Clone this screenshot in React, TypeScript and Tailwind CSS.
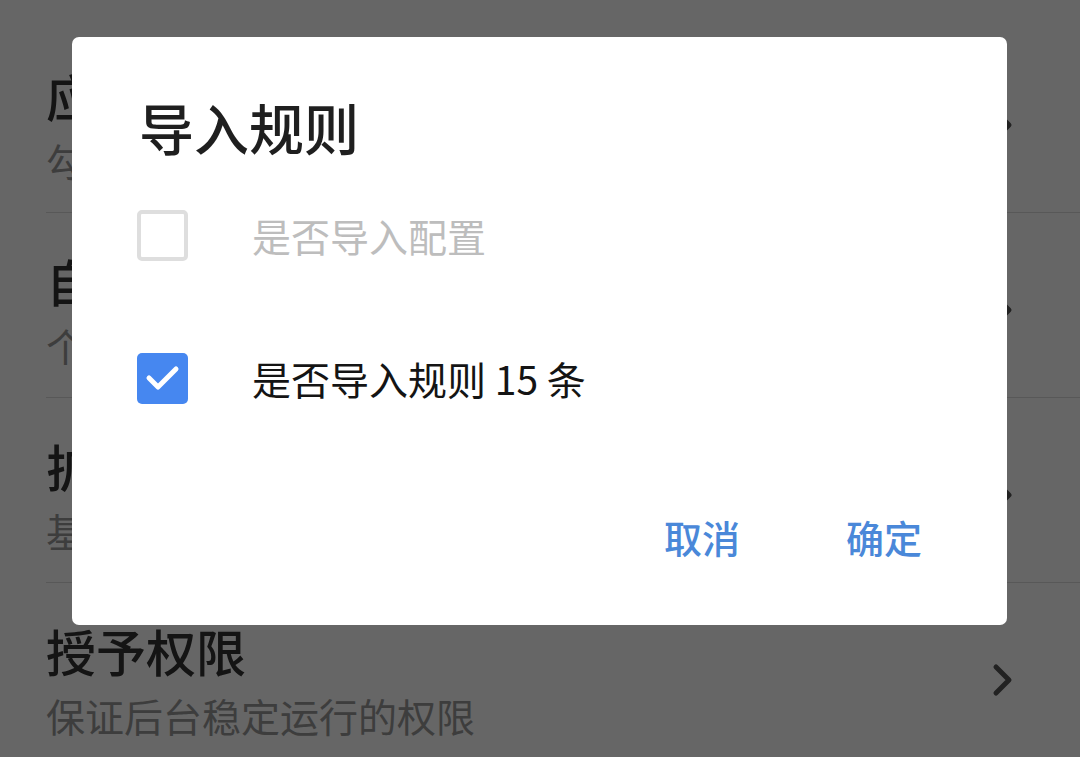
import { useState } from 'react';

const rows = [
  { title: '应用规则管理', sub: '勾选需要生效的规则' },
  { title: '自定义规则', sub: '个性化添加跳过规则' },
  { title: '扩展功能', sub: '基础功能之外的更多选项' },
  { title: '授予权限', sub: '保证后台稳定运行的权限' },
];

function Chevron() {
  return (
    <svg width="22" height="34" viewBox="0 0 22 34" fill="none">
      <path d="M4 4 L17 17 L4 30" stroke="#555" strokeWidth="5" strokeLinecap="round" strokeLinejoin="round" />
    </svg>
  );
}

function CheckRow({ label, checked, disabled, onToggle }: {
  label: string;
  checked: boolean;
  disabled?: boolean;
  onToggle: () => void;
}) {
  return (
    <button
      onClick={disabled ? undefined : onToggle}
      className="flex items-center h-[80px] text-left"
    >
      {checked ? (
        <span className="w-[51px] h-[51px] rounded-[5px] bg-[#4687f0] flex items-center justify-center">
          <svg width="40" height="40" viewBox="0 0 40 40" fill="none">
            <path d="M6 20 L15 29 L33 11" stroke="#fff" strokeWidth="5" strokeLinecap="round" strokeLinejoin="round" />
          </svg>
        </span>
      ) : (
        <span className="w-[51px] h-[51px] rounded-[5px] border-[4px] border-[#dedede] bg-white" />
      )}
      <span
        className={`ml-[64px] text-[39px] leading-[50px] ${disabled ? 'text-[#bdbdbd]' : 'text-[#141414]'}`}
      >
        {label}
      </span>
    </button>
  );
}

export default function App() {
  const [importConfig, setImportConfig] = useState(false);
  const [importRules, setImportRules] = useState(true);

  return (
    <div
      className="relative w-[1080px] h-[757px] overflow-hidden bg-white"
      style={{ fontFamily: '"Noto Sans CJK SC", "Noto Sans", sans-serif' }}
    >
      {/* settings list behind the dialog */}
      <div className="pt-[28px] pl-[46px]">
        {rows.map((row, i) => (
          <div
            key={row.title}
            className={`flex items-center pr-[66px] pt-[37px] pb-[28px] ${i < rows.length - 1 ? 'border-b border-[#dcdcdc]' : ''}`}
          >
            <div className="flex-1">
              <div className="text-[50px] leading-[60px] font-medium text-[#333]">{row.title}</div>
              <div className="mt-[11px] text-[39px] leading-[48px] text-[#999]">{row.sub}</div>
            </div>
            <Chevron />
          </div>
        ))}
      </div>

      {/* scrim */}
      <div className="absolute inset-0 bg-black/60" />

      {/* dialog */}
      <div className="absolute left-[72px] top-[37px] w-[935px] h-[588px] rounded-[7px] bg-white pl-[65px] pt-[57px] flex flex-col">
        <h2 className="ml-[2px] text-[55px] leading-[64px] font-medium text-[#1f1f1f]">导入规则</h2>
        <div className="mt-[37px]">
          <CheckRow
            label="是否导入配置"
            checked={importConfig}
            disabled
            onToggle={() => setImportConfig(!importConfig)}
          />
        </div>
        <div className="mt-[63px]">
          <CheckRow
            label="是否导入规则 15 条"
            checked={importRules}
            onToggle={() => setImportRules(!importRules)}
          />
        </div>
        <div className="mt-[87px] flex justify-end pr-[85px] gap-[106px]">
          <button className="text-[38px] leading-[64px] font-medium text-[#4a88d9]">取消</button>
          <button className="text-[38px] leading-[64px] font-medium text-[#4a88d9]">确定</button>
        </div>
      </div>
    </div>
  );
}
